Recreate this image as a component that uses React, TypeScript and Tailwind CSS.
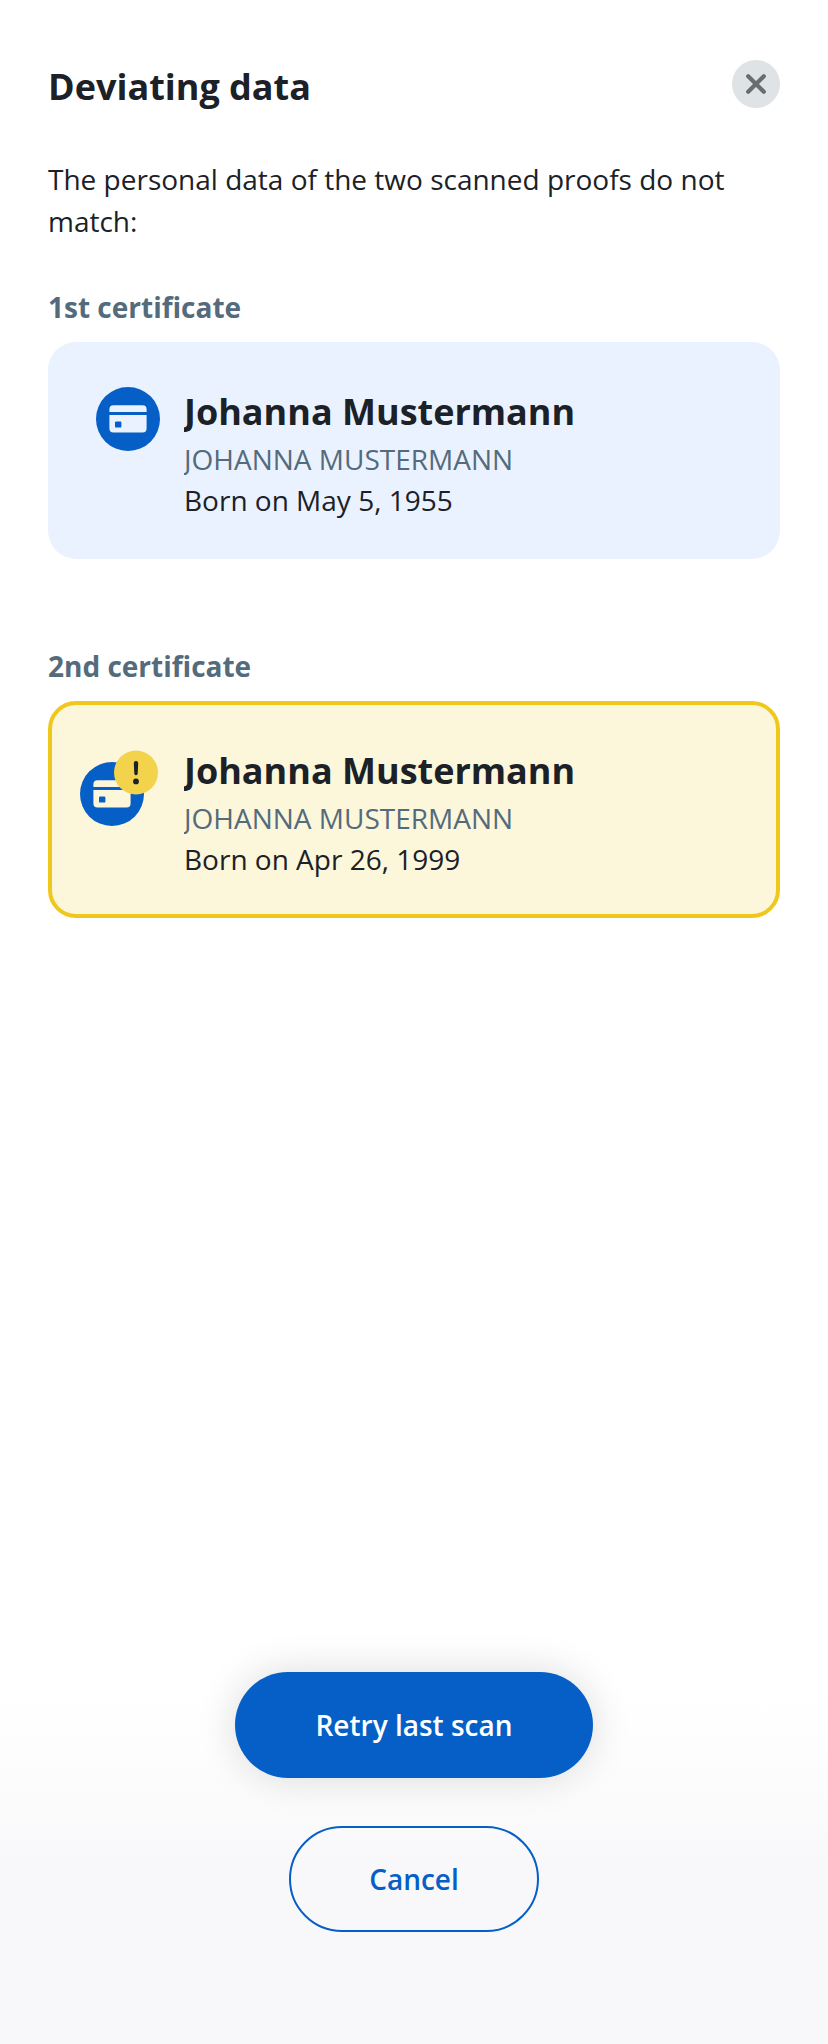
type CertificateProps = {
  label: string;
  name: string;
  transliterated: string;
  born: string;
  deviating?: boolean;
};

function CardIcon() {
  return (
    <svg className="block size-16" viewBox="0 0 64 64" aria-hidden="true">
      <path
        fill="#055fc6"
        fillRule="evenodd"
        d="M32 0a32 32 0 1 1 0 64a32 32 0 1 1 0-64zM17.4 18.2a4 4 0 0 0-4 4v2.7h37.2v-2.7a4 4 0 0 0-4-4zM13.4 28.1v13.4a4 4 0 0 0 4 4h29.2a4 4 0 0 0 4-4V28.1zM20.2 34.4h4a1.2 1.2 0 0 1 1.2 1.2v3.8a1.2 1.2 0 0 1-1.2 1.2h-4a1.2 1.2 0 0 1-1.2-1.2v-3.8a1.2 1.2 0 0 1 1.2-1.2z"
      />
    </svg>
  );
}

function WarningBadge() {
  return (
    <svg className="absolute -top-[12px] left-[34px] block size-[45px]" viewBox="0 0 45 45" aria-hidden="true">
      <circle cx="22" cy="22.5" r="22" fill="#f3d24c" />
      <path fill="#1b2127" d="M19.8 13.2a2.2 2.2 0 0 1 4.4 0l-.5 10.4a1.7 1.7 0 0 1-3.4 0z" />
      <circle cx="22" cy="31.4" r="2.9" fill="#1b2127" />
    </svg>
  );
}

function Certificate({ label, name, transliterated, born, deviating = false }: CertificateProps) {
  return (
    <section>
      <h2 className="text-[28px] leading-[42px] font-bold text-[#536b7c]">{label}</h2>
      <div
        className={
          deviating
            ? "mt-[14px] flex h-[217px] rounded-[28px] border-4 border-[#f0c81c] bg-[#fcf6da] pt-[39px] pl-[28px]"
            : "mt-[14px] flex h-[217px] rounded-[28px] bg-[#ebf2ff] pt-[43px] pl-[48px]"
        }
      >
        <div className={deviating ? "relative mt-[18px] mr-[40px] size-16" : "relative mt-[2px] mr-[24px] size-16"}>
          <CardIcon />
          {deviating && <WarningBadge />}
        </div>
        <div className="overflow-hidden">
          <p className="text-[36px] leading-[54px] font-bold">{name}</p>
          <p className="text-[28px] leading-[41px] text-[#536b7c]">{transliterated}</p>
          <p className="text-[28px] leading-[41px]">{born}</p>
        </div>
      </div>
    </section>
  );
}

export default function App() {
  return (
    <main className="flex h-[2044px] w-[828px] flex-col bg-white bg-[linear-gradient(to_bottom,#ffffff_1690px,#fcfcfc_1790px,#f8f8fb_1865px)] px-12 font-['Open_Sans',sans-serif] text-[#1b2127]">
      <header className="flex justify-between pt-[60px]">
        <h1 className="mt-[3px] text-[36px] leading-[48px] font-bold">Deviating data</h1>
        <button className="flex size-12 items-center justify-center rounded-full bg-[#dfe3e6]" aria-label="Close">
          <svg className="size-12" viewBox="0 0 48 48" aria-hidden="true">
            <path
              d="M16.2 16.2l15.6 15.6M31.8 16.2L16.2 31.8"
              fill="none"
              stroke="#666e6f"
              strokeWidth="4.2"
              strokeLinecap="round"
            />
          </svg>
        </button>
      </header>
      <p className="mt-[47px] text-[28px] leading-[42px]">
        The personal data of the two scanned proofs do not match:
      </p>
      <div className="mt-11 flex flex-col gap-[86px]">
        <Certificate
          label="1st certificate"
          name="Johanna Mustermann"
          transliterated="JOHANNA MUSTERMANN"
          born="Born on May 5, 1955"
        />
        <Certificate
          label="2nd certificate"
          name="Johanna Mustermann"
          transliterated="JOHANNA MUSTERMANN"
          born="Born on Apr 26, 1999"
          deviating
        />
      </div>
      <footer className="mt-auto flex flex-col items-center gap-12 pb-28 text-[28px] font-semibold">
        <button className="h-[106px] w-[358px] rounded-full bg-[#055fc6] text-white shadow-[0_0_40px_rgba(0,0,0,0.14)]">
          Retry last scan
        </button>
        <button className="h-[106px] w-[250px] rounded-full border-2 border-[#055fc6] text-[#055fc6]">Cancel</button>
      </footer>
    </main>
  );
}
